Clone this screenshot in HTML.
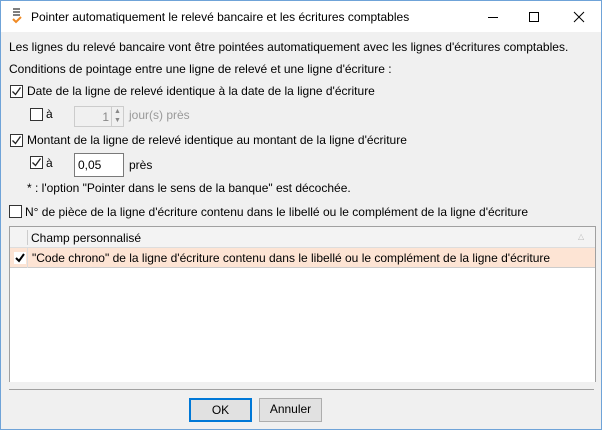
<!DOCTYPE html>
<html><head><meta charset="utf-8"><style>
*{margin:0;padding:0;box-sizing:border-box}
body{width:602px;height:430px;overflow:hidden;font-family:"Liberation Sans",sans-serif;font-size:12px;color:#000;background:#f0f0f0;position:relative}
.win{position:absolute;left:0;top:0;width:602px;height:430px;border:1px solid #6fa3d8;background:#f0f0f0}
.title{position:absolute;left:0;top:0;width:600px;height:31px;background:#fff}
.a{position:absolute;white-space:nowrap}
.cb{position:absolute;width:13px;height:13px;border:1px solid #333;background:#fff}
.cb svg{position:absolute;left:0;top:0}
.inp{position:absolute;background:#fff;border:1px solid #7a7a7a}
.btn{position:absolute;height:24px;background:#e1e1e1;border:1px solid #adadad;text-align:center;line-height:21px}
</style></head><body><div class="win">
<div class="title">
<svg class="a" style="left:10px;top:6px" width="12" height="18"><path d="M2 2h7M2 5h7M2 8h7" stroke="#555" stroke-width="1.5"/><path d="M2 12l3 3 5-5" stroke="#f08a24" stroke-width="2" fill="none"/></svg>
<div class="a" style="left:30px;top:9px">Pointer automatiquement le relevé bancaire et les écritures comptables</div>
<svg class="a" style="left:485px;top:10px" width="110" height="12"><path d="M2 6.5h10" stroke="#000"/><rect x="43.5" y="1.5" width="9" height="9" fill="none" stroke="#000"/><path d="M88 1l10 10M98 1l-10 10" stroke="#000"/></svg>
</div>
<div class="a" style="left:8px;top:39px">Les lignes du relevé bancaire vont être pointées automatiquement avec les lignes d'écritures comptables.</div>
<div class="a" style="left:8px;top:61px">Conditions de pointage entre une ligne de relevé et une ligne d'écriture :</div>
<div class="cb" style="left:9px;top:84px"><svg width="11" height="11"><path d="M1.5 5.5l3 3 5-7" stroke="#222" stroke-width="1.3" fill="none"/></svg></div>
<div class="a" style="left:26px;top:83px">Date de la ligne de relevé identique à la date de la ligne d'écriture</div>
<div class="cb" style="left:29px;top:107px"></div>
<div class="a" style="left:45px;top:106px">à</div>
<div class="inp" style="left:73px;top:105px;width:50px;height:21px;background:#f0f0f0;border-color:#ccc"><span class="a" style="right:14px;top:3px;color:#888">1</span><span class="a" style="right:0;top:0;width:12px;height:19px;border-left:1px solid #ccc;font-size:7px;color:#888;line-height:9px;text-align:center">▲<br>▼</span></div>
<div class="a" style="left:128px;top:107px;color:#999">jour(s) près</div>
<div class="cb" style="left:9px;top:133px"><svg width="11" height="11"><path d="M1.5 5.5l3 3 5-7" stroke="#222" stroke-width="1.3" fill="none"/></svg></div>
<div class="a" style="left:26px;top:132px">Montant de la ligne de relevé identique au montant de la ligne d'écriture</div>
<div class="cb" style="left:29px;top:155px"><svg width="11" height="11"><path d="M1.5 5.5l3 3 5-7" stroke="#222" stroke-width="1.3" fill="none"/></svg></div>
<div class="a" style="left:45px;top:155px">à</div>
<div class="inp" style="left:73px;top:152px;width:50px;height:24px"><span class="a" style="left:3px;top:4px">0,05</span></div>
<div class="a" style="left:128px;top:157px">près</div>
<div class="a" style="left:26px;top:180px">* : l'option "Pointer dans le sens de la banque" est décochée.</div>
<div class="cb" style="left:8px;top:204px"></div>
<div class="a" style="left:24px;top:204px">N° de pièce de la ligne d'écriture contenu dans le libellé ou le complément de la ligne d'écriture</div>
<div class="a" style="left:8px;top:225px;width:587px;height:156px;background:#fff;border:1px solid #a0a0a0;border-bottom:none">
<div class="a" style="left:0;top:0;width:585px;height:21px;background:#f3f3f3;border-bottom:1px solid #ddd"></div>
<div class="a" style="left:17px;top:3px;width:1px;height:15px;background:#ccc"></div>
<div class="a" style="left:21px;top:4px">Champ personnalisé</div>
<div class="a" style="left:568px;top:5px;color:#bbb;font-size:8px">△</div>
<div class="a" style="left:0;top:21px;width:585px;height:20px;background:#fde4d4;border-bottom:1px solid #ccc"></div>
<div class="a" style="left:17px;top:21px;width:1px;height:20px;background:#ddd"></div>
<div class="a" style="left:4px;top:25px;width:12px;height:12px;background:#fff"><svg width="12" height="12"><path d="M2 6l3 3 5-7" stroke="#000" stroke-width="2" fill="none"/></svg></div>
<div class="a" style="left:22px;top:24px">"Code chrono" de la ligne d'écriture contenu dans le libellé ou le complément de la ligne d'écriture</div>
</div>
<div class="a" style="left:8px;top:388px;width:585px;height:1px;background:#a0a0a0"></div>
<div class="btn" style="left:188px;top:397px;width:63px;border:2px solid #0078d7;line-height:20px">OK</div>
<div class="btn" style="left:258px;top:397px;width:63px">Annuler</div>
</div></body></html>
